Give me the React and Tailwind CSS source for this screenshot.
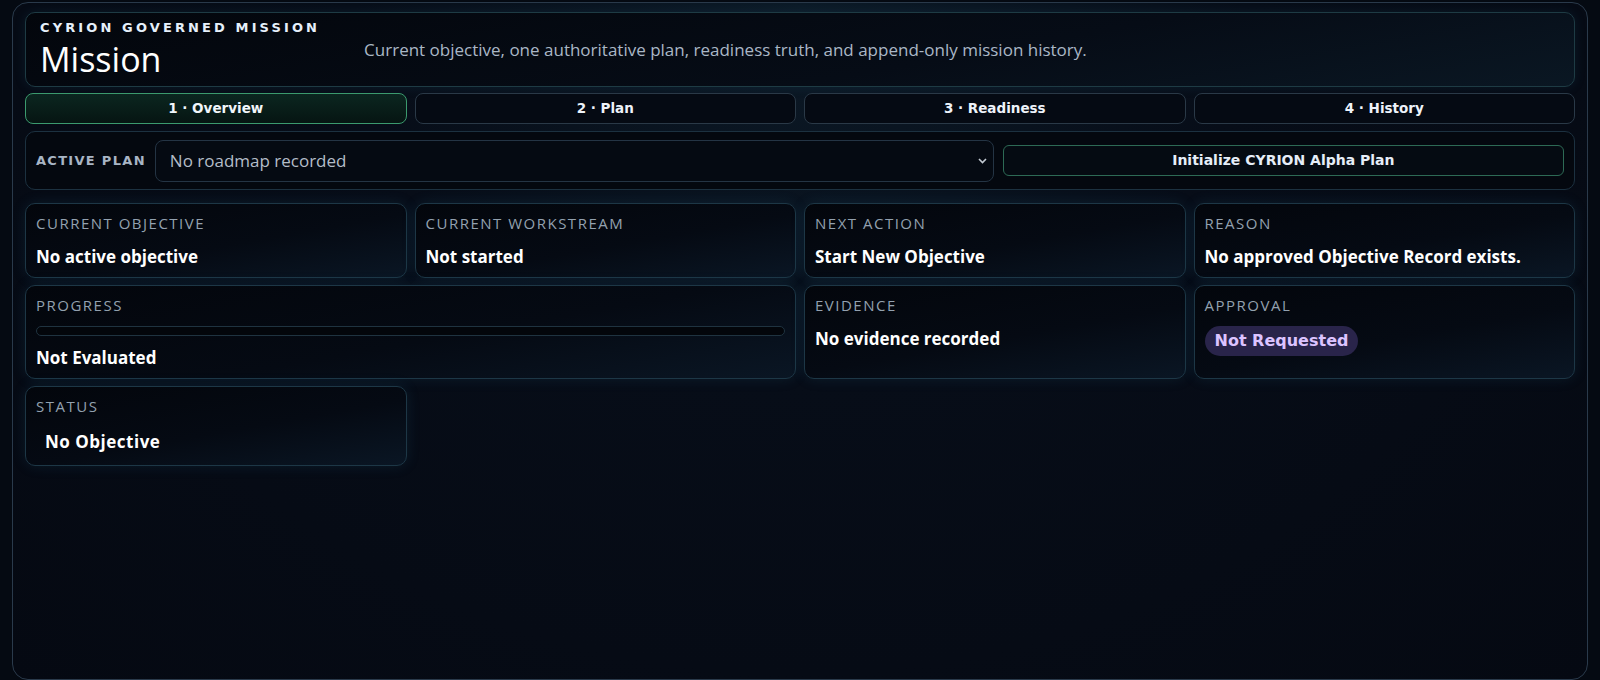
import { useState } from "react";

const TABS = ["1 · Overview", "2 · Plan", "3 · Readiness", "4 · History"];

function Card({ label, className = "", children }) {
  return (
    <div
      className={`rounded-[10px] border border-[#1d3746] bg-[linear-gradient(170deg,#03060c_0%,#050a13_55%,#0a1624_100%)] px-[10px] pt-[9px] pb-[8px] shadow-[0_0_14px_rgba(45,110,150,0.16)] ${className}`}
    >
      <div className="text-[15px] leading-5 tracking-[0.1em] text-[#93a1af]">{label}</div>
      {children}
    </div>
  );
}

function Value({ children }) {
  return <div className="mt-[12px] text-[17px] leading-6 font-bold text-white">{children}</div>;
}

export default function App() {
  const [tab, setTab] = useState(0);

  return (
    <main className="min-h-screen bg-[#050a12] px-3 pt-[2px] font-['Open_Sans',sans-serif]">
      <div className="h-[678px] rounded-2xl border border-[#2a3a4b] bg-[radial-gradient(ellipse_at_50%_0%,#0c1a27_0%,#070d18_40%,#050912_100%)] px-3 pt-[9px]">
        {/* header */}
        <header className="flex items-center gap-11 rounded-[10px] border border-[#1e3b44] bg-[linear-gradient(170deg,#03060c_0%,#060c16_60%,#0a1723_100%)] px-[14px] pt-[7px] pb-[7px] shadow-[0_0_12px_rgba(45,110,150,0.14)]">
          <div className="shrink-0">
            <div className="font-['DejaVu_Sans',sans-serif] text-[13px] leading-4 font-bold tracking-[0.24em] text-[#e6f0fb]">
              CYRION GOVERNED MISSION
            </div>
            <h1 className="mt-[3px] text-[34px] leading-10 text-white">Mission</h1>
          </div>
          <p className="text-[17px] text-[#aab7c6]">
            Current objective, one authoritative plan, readiness truth, and append-only mission history.
          </p>
        </header>

        {/* tabs */}
        <nav className="mt-[6px] grid grid-cols-4 gap-2">
          {TABS.map((t, i) => (
            <button
              key={t}
              onClick={() => setTab(i)}
              className={
                i === tab
                  ? "h-[31px] rounded-lg border border-[#3b9a6e] bg-[linear-gradient(180deg,#0b2620_0%,#061512_100%)] font-['DejaVu_Sans',sans-serif] text-[13.5px] font-bold text-[#f1f6fb]"
                  : "h-[31px] rounded-lg border border-[#2a3947] bg-[#050a13] font-['DejaVu_Sans',sans-serif] text-[13.5px] font-bold text-[#eef3fa]"
              }
            >
              {t}
            </button>
          ))}
        </nav>

        {/* active plan */}
        <section className="mt-[7px] flex h-[59px] items-center gap-[9px] rounded-[10px] border border-[#1c3140] bg-[#04080f] px-[10px]">
          <span className="shrink-0 font-['DejaVu_Sans',sans-serif] text-[13px] font-bold tracking-[0.1em] text-[#a8b5c5]">
            ACTIVE PLAN
          </span>
          <div className="relative min-w-0 flex-[3]">
            <select className="h-[42px] w-full appearance-none rounded-lg border border-[#243444] bg-[#050a12] pl-[14px] text-[17px] text-[#b4bdc8] outline-none">
              <option>No roadmap recorded</option>
            </select>
            <svg
              className="pointer-events-none absolute top-1/2 right-[7px] -translate-y-1/2"
              width="9"
              height="6"
              viewBox="0 0 9 6"
              fill="none"
            >
              <path d="M1 1l3.5 3.5L8 1" stroke="#c3cad3" strokeWidth="1.6" />
            </svg>
          </div>
          <button className="h-[31px] min-w-0 flex-[2] rounded-md border border-[#2d6a55] bg-[#050b12] font-['DejaVu_Sans',sans-serif] text-[14px] font-bold text-[#e6eef8]">
            Initialize CYRION Alpha Plan
          </button>
        </section>

        {/* cards */}
        <section className="mt-[13px] grid grid-cols-4 gap-x-2 gap-y-[7px]">
          <Card label="CURRENT OBJECTIVE">
            <Value>No active objective</Value>
          </Card>
          <Card label="CURRENT WORKSTREAM">
            <Value>Not started</Value>
          </Card>
          <Card label="NEXT ACTION">
            <Value>Start New Objective</Value>
          </Card>
          <Card label="REASON">
            <Value>No approved Objective Record exists.</Value>
          </Card>

          <Card label="PROGRESS" className="col-span-2">
            <div className="mt-[11px] h-[10px] rounded-full border border-[#1f3340] bg-[#03060b]" />
            <div className="mt-[10px] text-[17px] leading-6 font-bold text-white">Not Evaluated</div>
          </Card>
          <Card label="EVIDENCE">
            <Value>No evidence recorded</Value>
          </Card>
          <Card label="APPROVAL">
            <div className="mt-[11px]">
              <span className="inline-block rounded-full bg-[#29244a] px-[10px] py-[3px] font-['DejaVu_Sans',sans-serif] text-base leading-6 font-bold text-[#dcc3ff]">
                Not Requested
              </span>
            </div>
          </Card>

          <Card label="STATUS" className="pb-[6px]">
            <div className="mt-[11px]">
              <span className="inline-block px-[9px] py-[3px] text-[17px] leading-6 font-bold tracking-[0.03em] text-white">
                No Objective
              </span>
            </div>
          </Card>
        </section>
      </div>
    </main>
  );
}
